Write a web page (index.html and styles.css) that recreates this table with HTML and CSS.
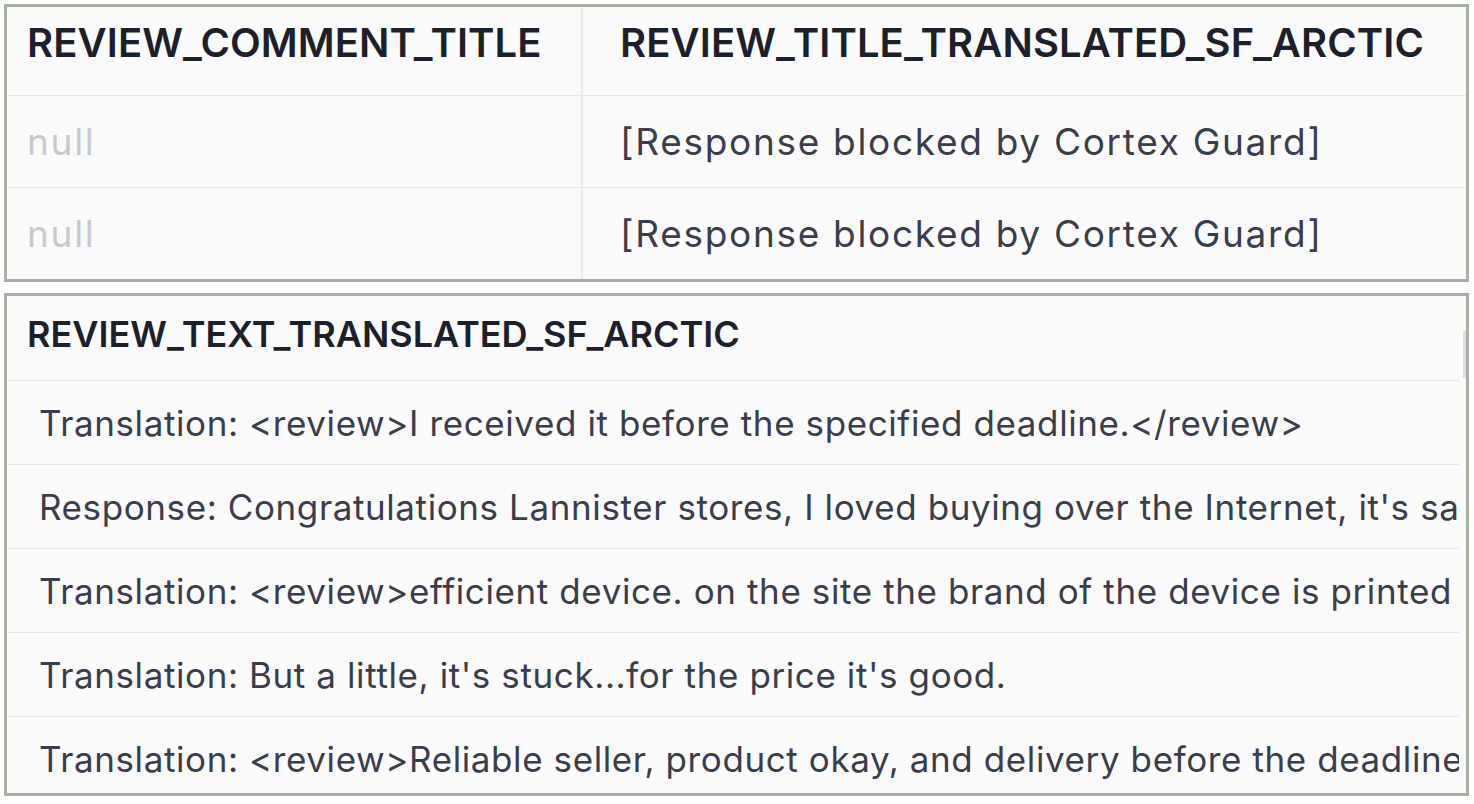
FILE: index.html
```html
<!DOCTYPE html>
<html lang="en">
<head>
    <meta charset="UTF-8">
    <title>Cortex Guard results</title>
    <link rel="stylesheet" href="styles.css">
</head>
<body>
    <div class="panel panel-top">
        <div class="grid">
            <div class="cell head c1">REVIEW_COMMENT_TITLE</div>
            <div class="cell head c2">REVIEW_TITLE_TRANSLATED_SF_ARCTIC</div>
            <div class="cell row c1 null">null</div>
            <div class="cell row c2">[Response blocked by Cortex Guard]</div>
            <div class="cell row c1 null">null</div>
            <div class="cell row c2">[Response blocked by Cortex Guard]</div>
        </div>
    </div>

    <div class="panel panel-bottom">
        <div class="list">
            <div class="list-head">REVIEW_TEXT_TRANSLATED_SF_ARCTIC</div>
            <div class="list-row">Translation: &lt;review&gt;I received it before the specified deadline.&lt;/review&gt;</div>
            <div class="list-row">Response: Congratulations Lannister stores, I loved buying over the Internet, it's safe and practical, congratulations to all, happy Easter.</div>
            <div class="list-row">Translation: &lt;review&gt;efficient device. on the site the brand of the device is printed as 3 desinfector and upon arrival it is another brand</div>
            <div class="list-row">Translation: But a little, it's stuck...for the price it's good.</div>
            <div class="list-row">Translation: &lt;review&gt;Reliable seller, product okay, and delivery before the deadline.&lt;/review&gt;</div>
        </div>
        <div class="scroll">
            <div class="thumb"></div>
        </div>
    </div>
</body>
</html>
```

FILE: styles.css
```css
* {
    margin: 0; padding: 0; box-sizing: border-box;
}
body {
    background: #fff;
    padding: 4px 5px 0 4px;
    font-family: Inter, "Noto Sans", "Liberation Sans", sans-serif;
}
.panel {
    border: 3px solid #a7b1a3;
    background: #fafafa;
    overflow: hidden;
}
.panel-bottom {
    margin-top: 11px;
    height: 503px;
    display: flex;
}

/* top table */
.grid {
    display: grid;
    grid-template-columns: 576px 1fr;
}
.cell {
    display: flex; align-items: center;
    white-space: nowrap;
}
.head {
    height: 88px;
    padding-bottom: 18px;
    font-size: 40px; font-weight: 600; color: #1d1f2b; letter-spacing: 0.1px;
}
.row {
    height: 92px;
    border-top: 1px solid #e5e5e7;
    font-size: 37px; color: #3b3d4a; letter-spacing: 1.7px;
}
.c1 { padding-left: 20px; border-right: 2px solid #e9e9eb; }
.c2 { padding-left: 37px; }
.null { color: #c8c9ce; }

/* bottom list */
.list {
    flex: 1;
    min-width: 0;
}
.list-head {
    height: 84px;
    display: flex; align-items: center;
    padding-left: 20px; padding-bottom: 8px;
    font-size: 36px; font-weight: 600; color: #1d1f2b;
}
.list-row {
    height: 84px;
    border-top: 1px solid #e5e5e7;
    display: flex; align-items: center;
    padding-left: 32px;
    white-space: nowrap; overflow: hidden;
    font-size: 35px; color: #3b3d4a; letter-spacing: 0.6px;
}
.scroll {
    width: 7px;
    padding-top: 35px;
    display: flex; justify-content: flex-end;
}
.thumb {
    width: 3px; height: 47px;
    background: #dcdcdf;
}
```
